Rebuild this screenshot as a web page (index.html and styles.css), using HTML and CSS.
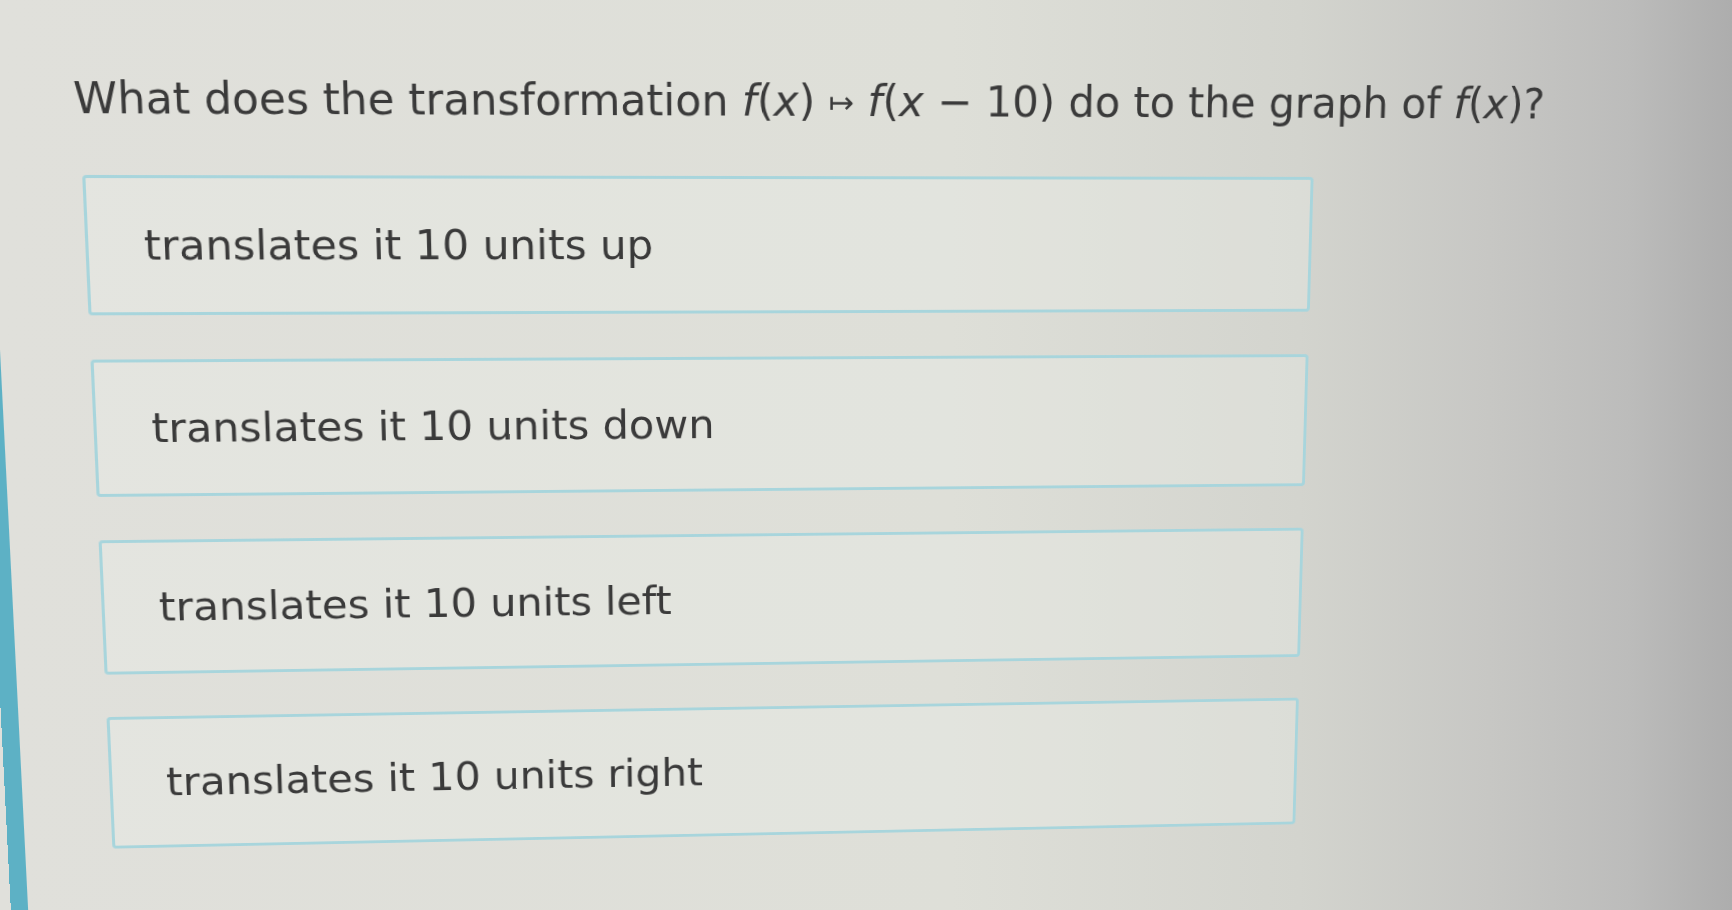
FILE: index.html
```html
<!DOCTYPE html>
<html>
<head>
  <meta charset="UTF-8">
  <meta name="viewport" content="width=device-width, initial-scale=1.0">
  <title>Transformations of functions</title>
  <link rel="stylesheet" href="styles.css">
</head>
<body>
<div class="stage">
  <div class="screen">
    <div class="rail"></div>

    <div class="content">
      <p class="prompt">
        What does the transformation
        <span class="math"><i>f</i>(<i>x</i>) <span class="maps">&#8614;</span> <i>f</i>(<i>x</i> &minus; 10)</span>
        do to the graph of <span class="math"><i>f</i>(<i>x</i>)</span>?
      </p>

      <div class="choices">
        <div class="choice">translates it 10 units up</div>
        <div class="choice">translates it 10 units down</div>
        <div class="choice">translates it 10 units left</div>
        <div class="choice">translates it 10 units right</div>
      </div>
    </div>
  </div>
</div>
</body>
</html>
```

FILE: styles.css
```css
/* -- page -- */
html,
body {
  margin: 0;
  padding: 0;
  height: 100%;
  overflow: hidden;
}

body {
  background: linear-gradient(90deg, #e0e0db 0%, #dedfd8 55%, #d3d4ce 75%, #c7c7c4 86%, #bcbcbb 94%, #adadad 100%);
  font-family: "DejaVu Sans", Verdana, sans-serif;
  color: #3a3a3a;
}

/* the screen is seen at a slight angle */
.stage {
  width: 100%;
  height: 100%;
  perspective: 2000px;
  perspective-origin: 866px 230px;
}

.screen {
  display: flex;
  height: 1000px;
  transform-origin: 866px 230px;
  transform: rotateZ(0.45deg) skewX(0.35deg) rotateX(-6.8deg) rotateY(3.9deg);
}

/* teal side bar */
.rail {
  flex: none;
  width: 17px;
  background: #5db1c5;
}

.content {
  flex: 1;
  padding: 77px 0 0 81px;
}

/* question line */
.prompt {
  margin: 0 0 48px 0;
  font-size: 42px;
  line-height: 50px;
  white-space: nowrap;
}

.math i {
  font-style: italic;
}

.maps {
  font-size: 0.72em;
  vertical-align: 0.1em;
}

/* answer boxes */
.choices {
  display: flex;
  flex-direction: column;
  gap: 44px;
  margin-left: 5px;
  width: 1217px;
}

.choice {
  box-sizing: border-box;
  height: 138px;
  display: flex;
  align-items: center;
  padding-left: 53px;
  border: 3px solid #a8d5dc;
  border-radius: 4px;
  background: rgba(236, 237, 232, 0.35);
  font-size: 41.5px;
}
```
